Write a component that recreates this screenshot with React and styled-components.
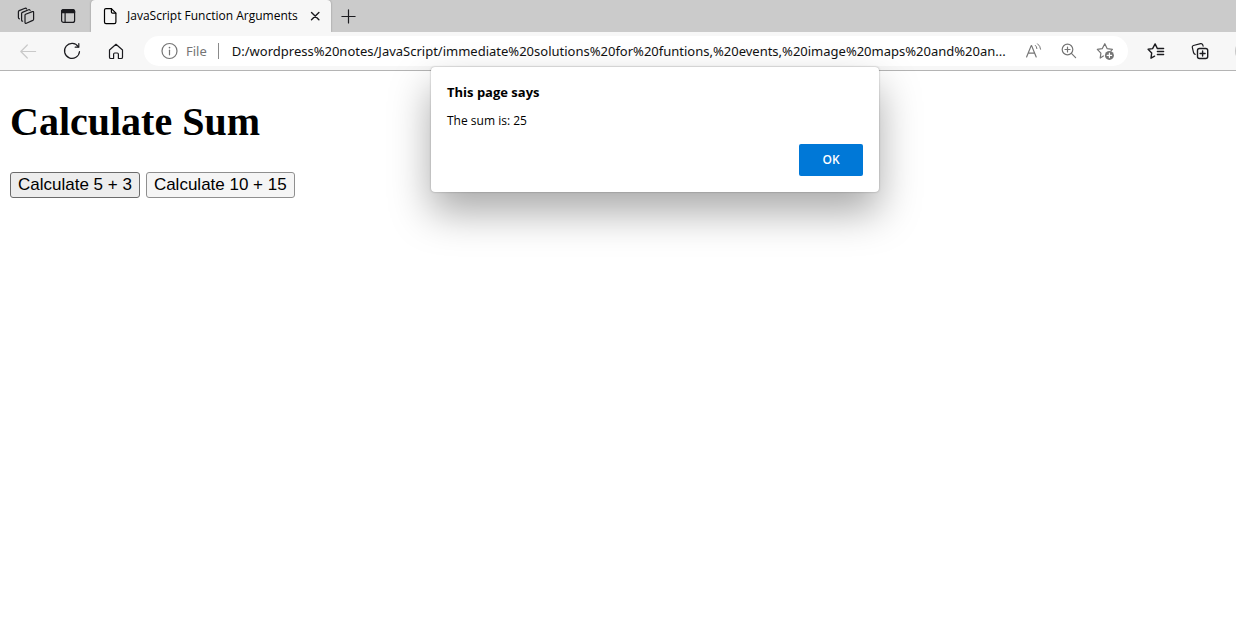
import React, { useState } from 'react'
import styled, { createGlobalStyle } from 'styled-components'

const uiFontFamily = '"Open Sans", "Noto Sans", sans-serif'
const addressFontFamily = '"Noto Sans", "Open Sans", sans-serif'
const chromeColor = '#f7f7f7'
const stripColor = '#cbcbcb'
const iconColor = '#1b1b1f'
const mutedColor = '#757575'
const accentColor = '#0078d7'

const GlobalStyle = createGlobalStyle`
  body {
    margin: 0;
    background: #fff;
    color: #000;
  }
  * {
    box-sizing: border-box;
  }
`

const TabStrip = styled.div`
  display: flex;
  height: 32px;
  padding-left: 4px;
  background: ${stripColor};
`

const IconButton = styled.button`
  display: flex;
  flex: none;
  align-items: center;
  justify-content: center;
  width: ${props => props.$width || 44}px;
  height: 32px;
  padding: 0;
  border: none;
  background: none;
  color: ${props => props.$color || iconColor};
`

const Tab = styled.div`
  display: flex;
  align-items: center;
  width: 240px;
  margin-left: 3px;
  padding: 0 4px 0 12px;
  border-radius: 4px 4px 0 0;
  background: ${chromeColor};
  box-shadow: 0 0 2px rgba(0, 0, 0, 0.35);
  font: 12px/16px ${uiFontFamily};
  svg {
    flex: none;
  }
  span {
    flex: 1;
    margin-left: 10px;
    white-space: nowrap;
  }
`

const Toolbar = styled.div`
  position: relative;
  display: flex;
  align-items: center;
  height: 39px;
  padding-left: 6px;
  border-bottom: 1px solid #b4b4b4;
  background: ${chromeColor};
`

const AddressBar = styled.div`
  display: flex;
  flex: 1;
  align-items: center;
  min-width: 0;
  height: 30px;
  margin: 0 6px;
  padding: 0 5px 0 17px;
  border-radius: 15px;
  background: #fff;
  color: ${mutedColor};
  font: 13px/18px ${addressFontFamily};
`

const Scheme = styled.label`
  margin-left: 7px;
  padding-right: 11px;
  border-right: 1px solid #8a8a8a;
  line-height: 16px;
`

const AddressInput = styled.input`
  flex: 1;
  min-width: 0;
  margin-left: 13px;
  padding: 0;
  border: none;
  outline: none;
  background: none;
  color: #111;
  font: inherit;
`

const Profile = styled.div`
  flex: none;
  width: 14px;
  height: 24px;
  padding-left: 13px;
  overflow: hidden;
  &::before {
    content: '';
    display: block;
    width: 24px;
    height: 24px;
    border-radius: 12px;
    background: #c4c4c4;
  }
`

const Page = styled.main`
  padding: 0 10px;
  h1 {
    margin: 0;
    padding: 28px 0 27px;
    font: bold 40px/46px "Liberation Serif", serif;
  }
`

const Actions = styled.div`
  display: flex;
  gap: 6px;
`

const PageButton = styled.button`
  height: 26px;
  padding: 0 7px;
  border: 1px solid ${props => props.$focused ? '#6b6b6b' : '#8f8f8f'};
  border-radius: 3px;
  background: ${props => props.$focused ? '#ededed' : '#f5f5f5'};
  color: #000;
  font: 17px/20px "Liberation Sans", sans-serif;
`

const Overlay = styled.div`
  position: absolute;
  top: 67px;
  left: 0;
  right: 0;
  display: flex;
  justify-content: center;
  padding-left: 74px;
`

const Dialog = styled.div`
  width: 448px;
  padding: 16px;
  border-radius: 4px;
  background: #fff;
  box-shadow: 0 0 2px rgba(0, 0, 0, 0.35), 0 20px 40px rgba(0, 0, 0, 0.34);
  font: 12px/16px ${uiFontFamily};
  h2 {
    margin: 0;
    font-size: 13px;
    line-height: 18px;
  }
  p {
    margin: 10px 0 13px;
    line-height: 20px;
  }
  footer {
    display: flex;
    justify-content: flex-end;
  }
`

const OkButton = styled.button`
  width: 64px;
  height: 32px;
  border: none;
  border-radius: 2px;
  background: ${accentColor};
  color: #fff;
  font: 600 12px/16px ${uiFontFamily};
`

const Icon = ({ width = 18, height = 18, children }) => (
  <svg
    width={width}
    height={height}
    viewBox={`0 0 ${width} ${height}`}
    fill='none'
    stroke='currentColor'
    strokeWidth='1.2'
    strokeLinecap='round'
    strokeLinejoin='round'
    aria-hidden='true'
  >
    {children}
  </svg>
)

const WorkspacesIcon = () => (
  <Icon>
    <path d='M8.6 7.2 15.4 4.6Q16.6 4.2 16.6 5.4V12.2Q16.6 13 15.8 13.4L9.4 16.2Q8 16.7 8 15.4V8.2Q8 7.5 8.6 7.2Z' />
    <path d='M5.6 14.2Q4.6 14.2 4.6 13.2V6.6Q4.6 5.8 5.4 5.4L11.6 2.8Q12.8 2.4 13.1 3.4' />
    <path d='M2.4 11.8Q1.4 11.6 1.4 10.6V4.8Q1.4 4 2.2 3.6L8 1.3Q9.2 1 9.6 1.9' />
  </Icon>
)

const TabActionsIcon = () => (
  <Icon>
    <rect x='2.6' y='2.6' width='13' height='12.8' rx='2' />
    <path d='M2.6 4.6Q2.6 2.6 4.6 2.6H13.6Q15.6 2.6 15.6 4.6V5.6H2.6Z' fill='currentColor' />
    <path d='M6.1 6V15' />
  </Icon>
)

const PageIcon = () => (
  <Icon width={14}>
    <path d='M3 1.6H8.4L12.9 6.1V15Q12.9 16.6 11.3 16.6H3Q1.5 16.6 1.5 15V3.1Q1.5 1.6 3 1.6Z' />
    <path d='M8.4 1.8V5Q8.4 6.1 9.5 6.1H12.7' />
  </Icon>
)

const CloseIcon = () => (
  <Icon>
    <path d='M5.5 5.4 12.9 12.8M12.9 5.4 5.5 12.8' strokeWidth='1.4' />
  </Icon>
)

const PlusIcon = () => (
  <Icon>
    <path d='M9.5 2.8V16M2.9 9.5H16.1' />
  </Icon>
)

const BackIcon = () => (
  <Icon>
    <path d='M16.6 9.5H1.8M8.3 3 1.8 9.5 8.3 16' />
  </Icon>
)

const RefreshIcon = () => (
  <Icon>
    <path d='M15.3 4.8A7.5 7.5 0 1 0 16.5 9.5' />
    <path d='M15.8 1.6V5.2H12.2' />
  </Icon>
)

const HomeIcon = () => (
  <Icon>
    <path d='M2.5 8 9 2.3 15.5 8V15.2Q15.5 16.5 14.2 16.5H11.4V12.2Q11.4 11 10.2 11H7.8Q6.6 11 6.6 12.2V16.5H3.8Q2.5 16.5 2.5 15.2Z' />
  </Icon>
)

const InfoIcon = () => (
  <Icon>
    <circle cx='8.5' cy='9' r='7.5' />
    <path d='M8.5 8.2V12.8' />
    <path d='M8.5 5.6V5.7' strokeWidth='1.6' />
  </Icon>
)

const ReadAloudIcon = () => (
  <Icon>
    <path d='M2.6 15 7.2 3.6H7.6L12.2 15M4.2 11.2H10.6' />
    <path d='M11.4 3.4Q12.8 4.5 12.9 6.6M13.6 1.8Q16.4 4 16.6 7.2' strokeWidth='1' />
  </Icon>
)

const ZoomIcon = () => (
  <Icon>
    <circle cx='7.5' cy='7.5' r='5.3' />
    <path d='M11.4 11.4 15.6 15.6M7.5 5V10M5 7.5H10' />
  </Icon>
)

const AddFavoriteIcon = () => (
  <Icon>
    <path d='M7.4 14 4.2 16 4.9 11.1 1.3 7.4 6.2 6.7 8.8 1.7 11.2 6.7 16.4 7.4 15 8.8' />
    <circle cx='13.4' cy='13.4' r='4.5' fill='currentColor' stroke='none' />
    <path d='M13.4 11.2V15.6M11.2 13.4H15.6' stroke='#fff' />
  </Icon>
)

const FavoritesIcon = () => (
  <Icon>
    <path d='M7.6 14.2 4 16.2 4.7 10.9 1.1 7.2 5.6 6.6 8.1 1.9 10.4 6.6H11' strokeWidth='1.4' />
    <path d='M11.2 6.5H16.6M10.4 9.5H16.6M10.4 12.5H16.6' strokeWidth='1.4' />
  </Icon>
)

const CollectionsIcon = () => (
  <Icon>
    <rect x='6.5' y='6.5' width='10.2' height='10' rx='2' fill={chromeColor} strokeWidth='1.4' />
    <path d='M11.6 9V14M9.1 11.5H14.1' strokeWidth='1.4' />
    <path d='M4.2 12.3Q3 12 2.6 10.8L1.3 5.4Q1 4 2.4 3.5L9.6 1.6Q11.2 1.3 11.7 2.7L12.1 4.2' />
  </Icon>
)

const Alert = ({ message, onClose }) => (
  <Overlay>
    <Dialog role='alertdialog' aria-labelledby='alert-title' aria-describedby='alert-message'>
      <h2 id='alert-title'>This page says</h2>
      <p id='alert-message'>{message}</p>
      <footer>
        <OkButton type='button' onClick={onClose}>OK</OkButton>
      </footer>
    </Dialog>
  </Overlay>
)

const App = () => {
  const [sum, setSum] = useState(25)

  return <>
    <GlobalStyle />
    <TabStrip>
      <IconButton aria-label='Workspaces'><WorkspacesIcon /></IconButton>
      <IconButton $width={40} aria-label='Tab actions'><TabActionsIcon /></IconButton>
      <Tab>
        <PageIcon />
        <span>JavaScript Function Arguments</span>
        <IconButton $width={24} aria-label='Close tab'><CloseIcon /></IconButton>
      </Tab>
      <IconButton $width={34} aria-label='New tab'><PlusIcon /></IconButton>
    </TabStrip>
    <Toolbar>
      <IconButton $color='#c9c9c9' aria-label='Back'><BackIcon /></IconButton>
      <IconButton aria-label='Refresh'><RefreshIcon /></IconButton>
      <IconButton aria-label='Home'><HomeIcon /></IconButton>
      <AddressBar>
        <InfoIcon />
        <Scheme htmlFor='address'>File</Scheme>
        <AddressInput
          id='address'
          type='text'
          defaultValue='D:/wordpress%20notes/JavaScript/immediate%20solutions%20for%20funtions,%20events,%20image%20maps%20and%20an...'
        />
        <IconButton $width={36} $color={mutedColor} aria-label='Read aloud'><ReadAloudIcon /></IconButton>
        <IconButton $width={36} $color={mutedColor} aria-label='Zoom'><ZoomIcon /></IconButton>
        <IconButton $width={36} $color={mutedColor} aria-label='Add to favorites'><AddFavoriteIcon /></IconButton>
      </AddressBar>
      <IconButton aria-label='Favorites'><FavoritesIcon /></IconButton>
      <IconButton aria-label='Collections'><CollectionsIcon /></IconButton>
      <Profile />
    </Toolbar>
    <Page>
      <h1>Calculate Sum</h1>
      <Actions>
        <PageButton $focused onClick={() => setSum(5 + 3)}>Calculate 5 + 3</PageButton>
        <PageButton onClick={() => setSum(10 + 15)}>Calculate 10 + 15</PageButton>
      </Actions>
    </Page>
    {sum !== null &&
      <Alert message={`The sum is: ${sum}`} onClose={() => setSum(null)} />
    }
  </>
}

export default App
